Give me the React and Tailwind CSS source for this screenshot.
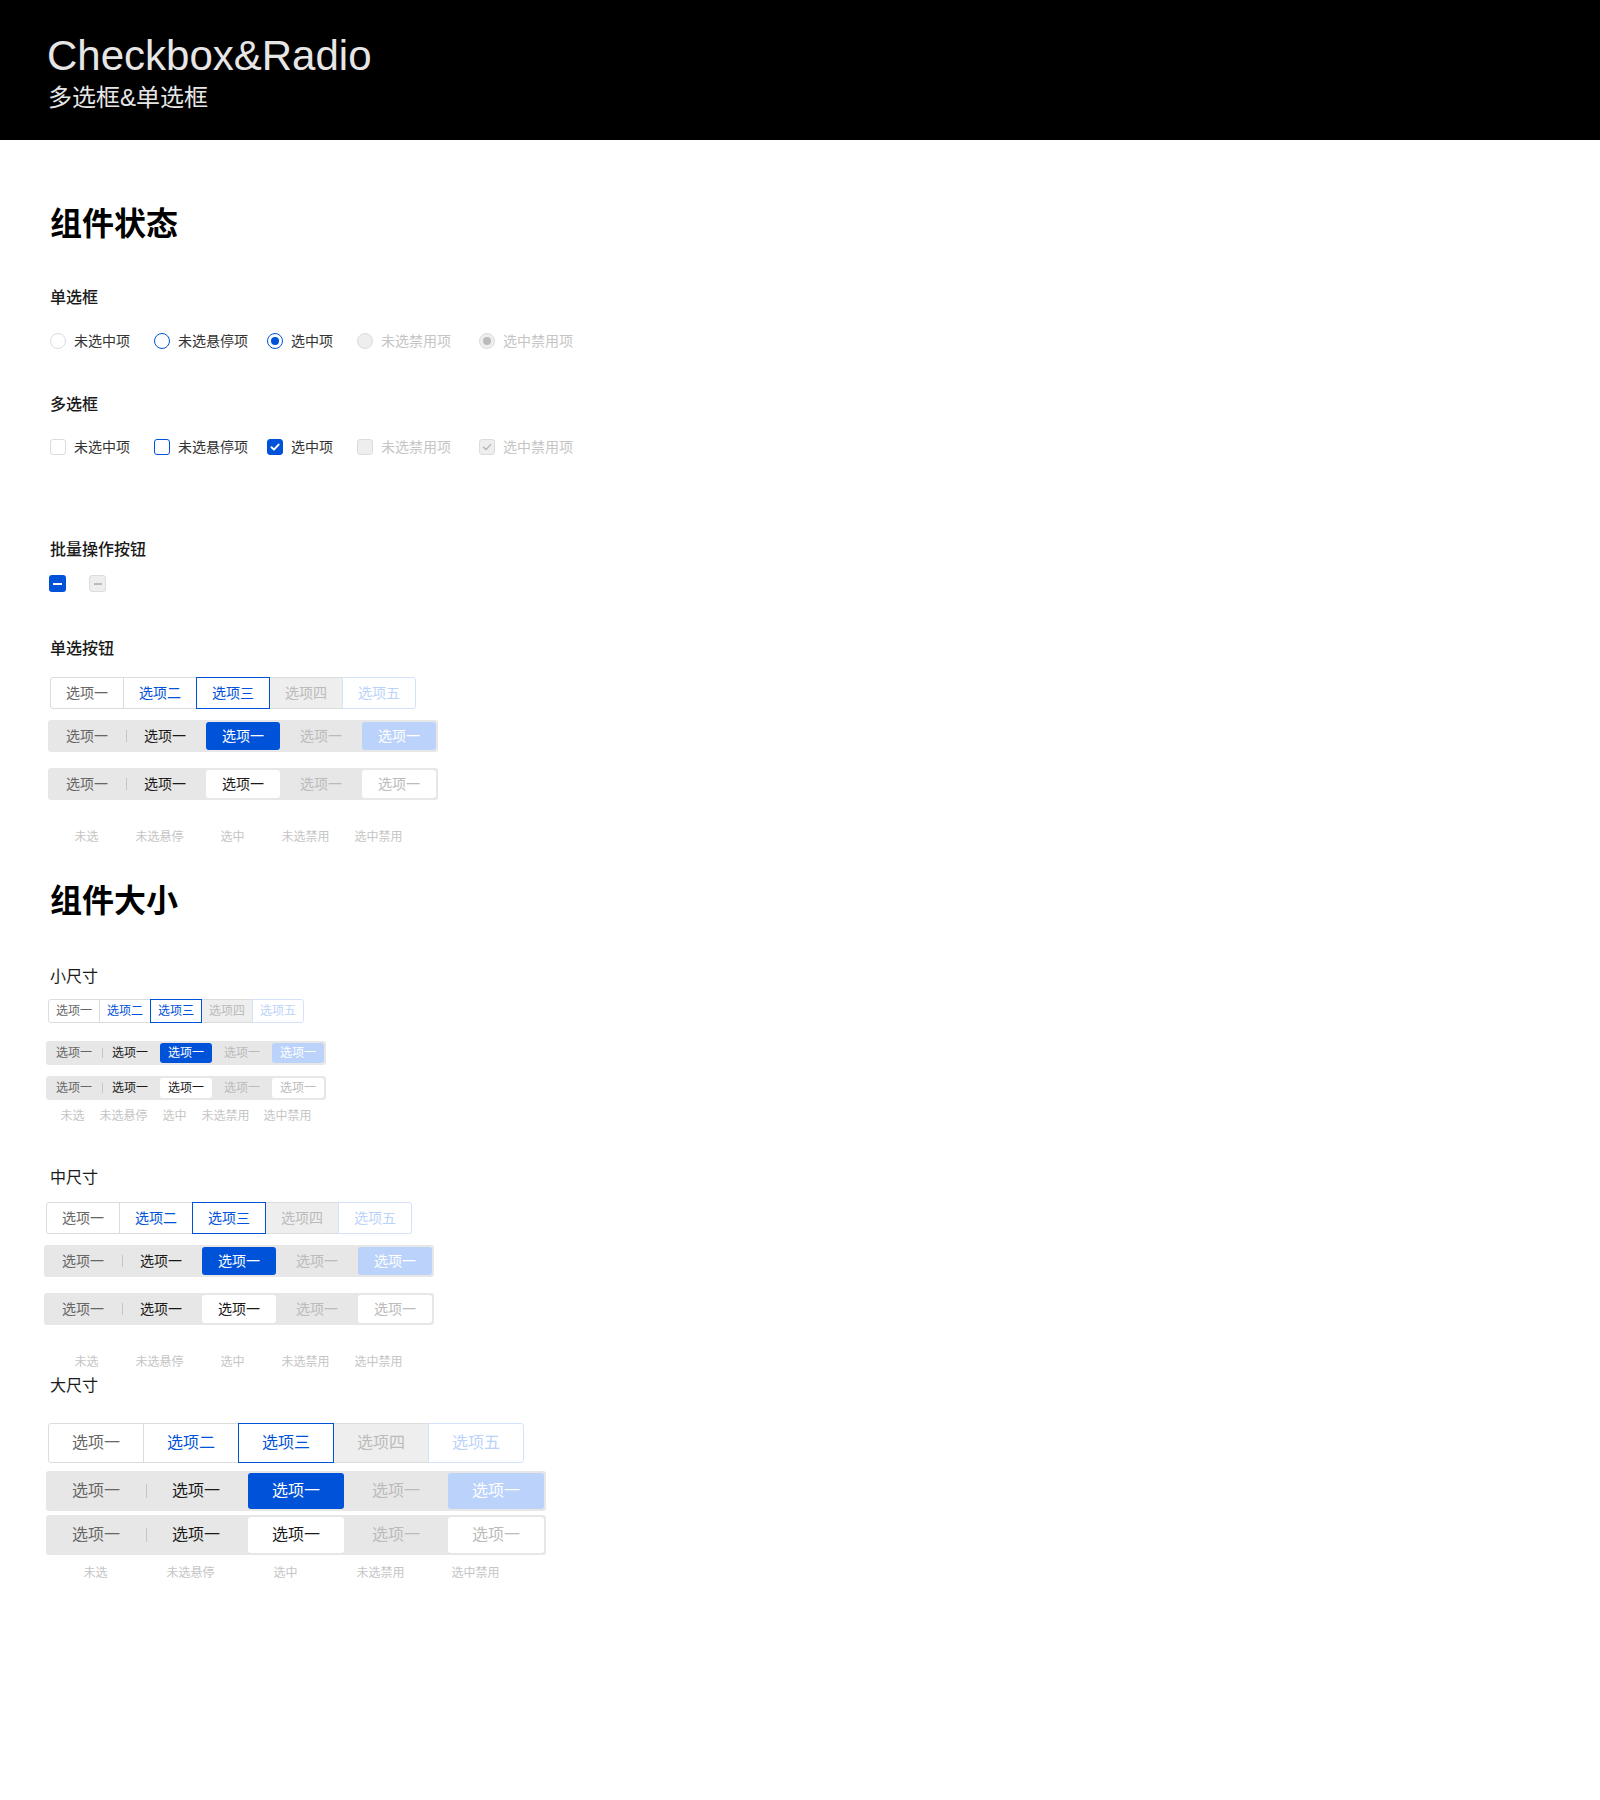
import React from "react";

const SIZES = {
  sm: {
    seg: "w-[52px] h-[24px] text-[12px]",
    item: "w-[52px] h-[20px] text-[12px]",
    divider: "h-[10px]",
    label: "w-[51px]",
  },
  md: {
    seg: "w-[74px] h-[32px] text-[14px]",
    item: "w-[74px] h-[28px] text-[14px]",
    divider: "h-[12px]",
    label: "w-[73px]",
  },
  lg: {
    seg: "w-[96px] h-[40px] text-[16px]",
    item: "w-[96px] h-[36px] text-[16px]",
    divider: "h-[14px]",
    label: "w-[95px]",
  },
};

const ITEM_GAPS = ["", "ml-[24px]", "ml-[19px]", "ml-[24px]", "ml-[28px]"];

const STATES = [
  { key: "default", label: "未选中项" },
  { key: "hover", label: "未选悬停项" },
  { key: "checked", label: "选中项" },
  { key: "disabled", label: "未选禁用项" },
  { key: "disabledChecked", label: "选中禁用项" },
];

function CheckIcon({ color, width }) {
  return (
    <svg width="12" height="12" viewBox="0 0 12 12" fill="none">
      <polyline
        points="2.5 6.2 5 8.6 9.6 3.6"
        stroke={color}
        strokeWidth={width}
        strokeLinecap="round"
        strokeLinejoin="round"
      />
    </svg>
  );
}

function Radio({ state }) {
  const box = {
    default: "border-[#dcdcdc] bg-white",
    hover: "border-[#0052d9] bg-white",
    checked: "border-[#0052d9] bg-white",
    disabled: "border-[#dcdcdc] bg-[#eeeeee]",
    disabledChecked: "border-[#dcdcdc] bg-[#eeeeee]",
  }[state];

  return (
    <span className={`w-[16px] h-[16px] rounded-full border flex items-center justify-center shrink-0 ${box}`}>
      {state === "checked" && <span className="w-[8px] h-[8px] rounded-full bg-[#0052d9]" />}
      {state === "disabledChecked" && <span className="w-[8px] h-[8px] rounded-full bg-[#bbbbbb]" />}
    </span>
  );
}

function Checkbox({ state }) {
  const box = {
    default: "border-[#dcdcdc] bg-white",
    hover: "border-[#0052d9] bg-white",
    checked: "border-[#0052d9] bg-[#0052d9]",
    disabled: "border-[#dcdcdc] bg-[#eeeeee]",
    disabledChecked: "border-[#dcdcdc] bg-[#eeeeee]",
  }[state];

  return (
    <span className={`w-[16px] h-[16px] rounded-[3px] border flex items-center justify-center shrink-0 ${box}`}>
      {state === "checked" && <CheckIcon color="#ffffff" width={2} />}
      {state === "disabledChecked" && <CheckIcon color="#b5b5b5" width={1.4} />}
    </span>
  );
}

function StateRow({ kind }) {
  return (
    <div className="flex items-center h-[24px]">
      {STATES.map((s, i) => {
        const disabled = s.key === "disabled" || s.key === "disabledChecked";
        return (
          <div key={s.key} className={`flex items-center gap-2 ${ITEM_GAPS[i]}`}>
            {kind === "radio" ? <Radio state={s.key} /> : <Checkbox state={s.key} />}
            <span className={`text-[14px] leading-[24px] ${disabled ? "text-[#c5c5c5]" : "text-[#333333]"}`}>
              {s.label}
            </span>
          </div>
        );
      })}
    </div>
  );
}

function OutlineGroup({ size, className = "" }) {
  const segs = [
    { text: "选项一", cls: "border-[#dcdcdc] text-[#666666] bg-white rounded-l-[3px]" },
    { text: "选项二", cls: "border-[#dcdcdc] text-[#0052d9] bg-white" },
    { text: "选项三", cls: "border-[#0052d9] text-[#0052d9] bg-white z-10" },
    { text: "选项四", cls: "border-[#dcdcdc] text-[#bbbbbb] bg-[#eeeeee]" },
    { text: "选项五", cls: "border-[#d4e3fc] text-[#bbd3fb] bg-white rounded-r-[3px] z-10" },
  ];
  return (
    <div className={`flex ${className}`}>
      {segs.map((s, i) => (
        <div
          key={s.text}
          className={`relative flex items-center justify-center border ${SIZES[size].seg} ${s.cls} ${i > 0 ? "-ml-px" : ""}`}
        >
          {s.text}
        </div>
      ))}
    </div>
  );
}

function FilledGroup({ size, variant, className = "" }) {
  const sz = SIZES[size];
  const blue = variant === "blue";
  const items = [
    "text-[#666666]",
    "text-[#1a1a1a]",
    blue ? "bg-[#0052d9] text-white" : "bg-white text-[#1a1a1a]",
    "text-[#bbbbbb]",
    blue ? "bg-[#bbd3fb] text-white" : "bg-white text-[#bbbbbb]",
  ];
  return (
    <div className={`flex w-fit bg-[#e7e7e7] p-[2px] rounded-[3px] ${className}`}>
      {items.map((cls, i) => (
        <React.Fragment key={i}>
          {i > 0 && (
            <div className="w-[4px] flex items-center justify-center">
              {i === 1 && <span className={`w-px bg-[#c5c5c5] ${sz.divider}`} />}
            </div>
          )}
          <div className={`flex items-center justify-center rounded-[3px] ${sz.item} ${cls}`}>选项一</div>
        </React.Fragment>
      ))}
    </div>
  );
}

function StateLabels({ size, className = "", lastGap = "" }) {
  const labels = ["未选", "未选悬停", "选中", "未选禁用", "选中禁用"];
  return (
    <div className={`flex ${className}`}>
      {labels.map((t, i) => (
        <div
          key={t}
          className={`text-center text-[12px] leading-[20px] text-[#c5c5c5] ${SIZES[size].label} ${i === labels.length - 1 ? lastGap : ""}`}
        >
          {t}
        </div>
      ))}
    </div>
  );
}

function Heading({ children, className = "" }) {
  return (
    <h2 className={`text-[32px] leading-[40px] font-semibold text-black ${className}`}>{children}</h2>
  );
}

function Label({ children, className = "", light = false }) {
  return (
    <h3 className={`text-[16px] leading-[24px] text-[#1a1a1a] ${light ? "font-normal" : "font-medium"} ${className}`}>
      {children}
    </h3>
  );
}

export default function App() {
  return (
    <div className="min-h-[1800px] bg-white font-['Liberation_Sans','Noto_Sans_CJK_SC',sans-serif]">
      {/* HEADER */}
      <header className="h-[140px] bg-black pl-[47px] pt-[35px]">
        <h1 className="text-[42px] leading-[42px] text-[#e6e6e6]">Checkbox&amp;Radio</h1>
        <p className="mt-[9px] pl-[1px] text-[24px] leading-[24px] text-[#e6e6e6]">多选框&amp;单选框</p>
      </header>

      <main className="pl-[50px]">
        {/* 组件状态 */}
        <Heading className="mt-[64px]">组件状态</Heading>

        <Label className="mt-[42px]">单选框</Label>
        <div className="mt-[19px]">
          <StateRow kind="radio" />
        </div>

        <Label className="mt-[40px]">多选框</Label>
        <div className="mt-[18px]">
          <StateRow kind="checkbox" />
        </div>

        <Label className="mt-[79px]">批量操作按钮</Label>
        <div className="mt-[13px] flex items-center gap-[23px] -ml-px">
          <span className="w-[17px] h-[17px] rounded-[3px] bg-[#0052d9] flex items-center justify-center">
            <span className="w-[9px] h-[2px] bg-white" />
          </span>
          <span className="w-[17px] h-[17px] rounded-[3px] border border-[#dcdcdc] bg-[#eeeeee] flex items-center justify-center">
            <span className="w-[8px] h-[2px] bg-[#bbbbbb]" />
          </span>
        </div>

        <Label className="mt-[45px]">单选按钮</Label>
        <OutlineGroup size="md" className="mt-[16px]" />
        <FilledGroup size="md" variant="blue" className="mt-[11px] -ml-[2px]" />
        <FilledGroup size="md" variant="white" className="mt-[16px] -ml-[2px]" />
        <StateLabels size="md" className="mt-[27px]" />

        {/* 组件大小 */}
        <Heading className="mt-[34px]">组件大小</Heading>

        <Label light className="mt-[44px]">小尺寸</Label>
        <OutlineGroup size="sm" className="mt-[10px] -ml-[2px]" />
        <FilledGroup size="sm" variant="blue" className="mt-[18px] -ml-[4px]" />
        <FilledGroup size="sm" variant="white" className="mt-[11px] -ml-[4px]" />
        <StateLabels size="sm" className="mt-[6px] -ml-[3px]" lastGap="ml-[11px]" />

        <Label light className="mt-[40px]">中尺寸</Label>
        <OutlineGroup size="md" className="mt-[12px] -ml-[4px]" />
        <FilledGroup size="md" variant="blue" className="mt-[11px] -ml-[6px]" />
        <FilledGroup size="md" variant="white" className="mt-[16px] -ml-[6px]" />
        <StateLabels size="md" className="mt-[27px]" />

        <Label light className="mt-[2px]">大尺寸</Label>
        <OutlineGroup size="lg" className="mt-[25px] -ml-[2px]" />
        <FilledGroup size="lg" variant="blue" className="mt-[8px] -ml-[4px]" />
        <FilledGroup size="lg" variant="white" className="mt-[4px] -ml-[4px]" />
        <StateLabels size="lg" className="mt-[8px] -ml-[2px]" />
      </main>
    </div>
  );
}
